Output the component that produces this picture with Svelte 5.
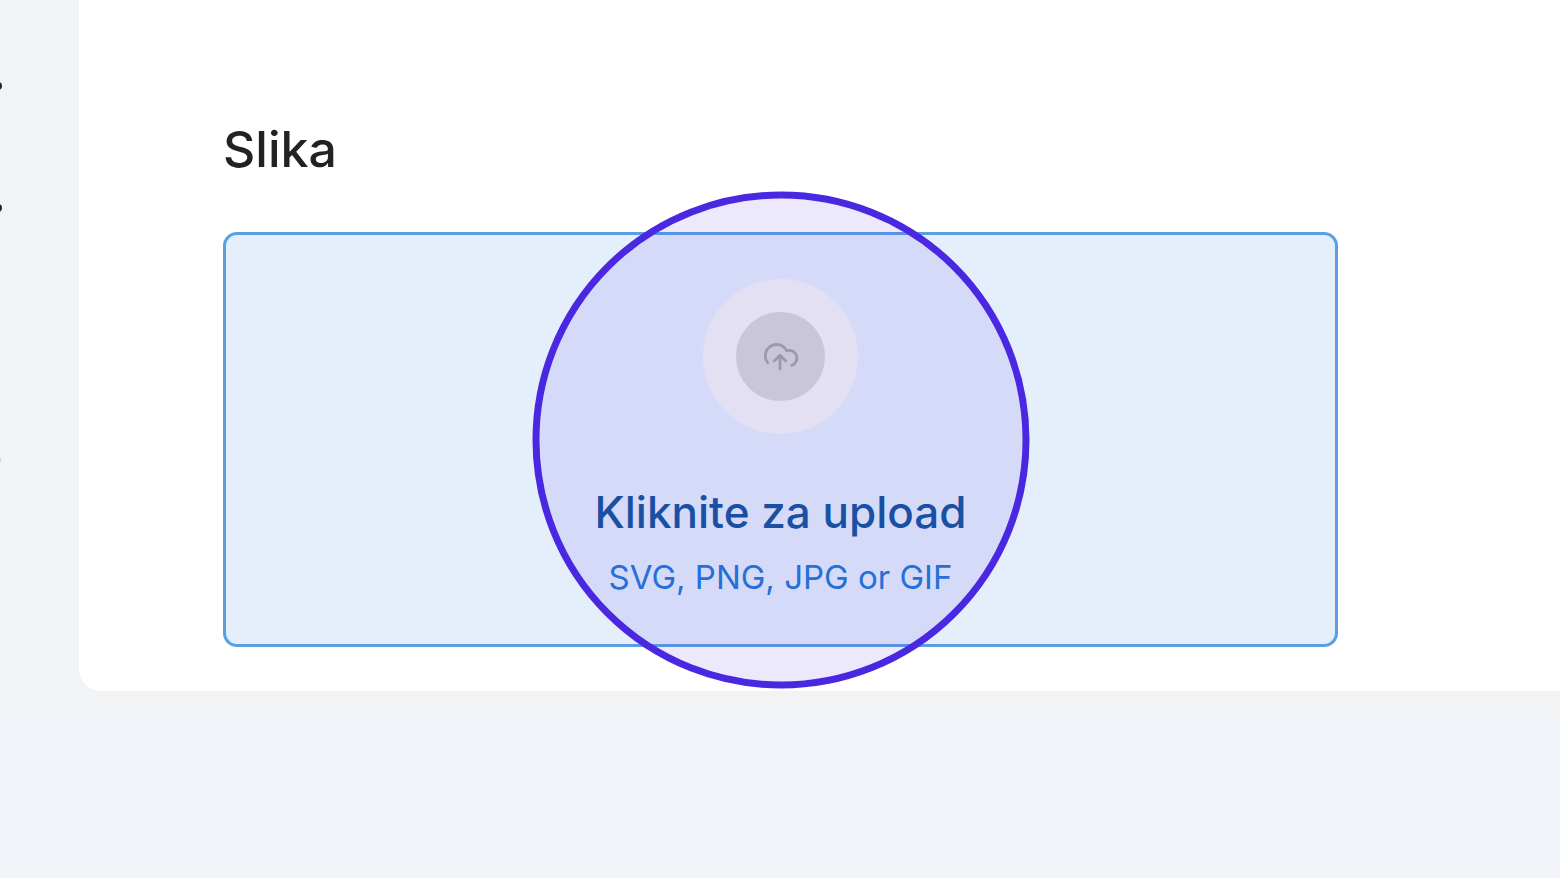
<script lang="ts">
  let files = $state<FileList | null>(null);
  let picker: HTMLInputElement;

  const formats = 'SVG, PNG, JPG or GIF';
  const label = $derived(files && files.length > 0 ? files[0].name : 'Kliknite za upload');
</script>

<div class="page">
  <div class="shell">
    <aside class="rail" aria-hidden="true">
      <span class="dot"></span>
      <span class="dot"></span>
      <span class="dot faint"></span>
    </aside>

    <main class="card">
      <h2>Slika</h2>
      <div class="field">
        <button type="button" class="dropzone" onclick={() => picker.click()}>
          <span class="badge">
            <svg viewBox="0 0 48 40" width="48" height="40" aria-hidden="true">
              <path d="M10.7 25.6A11.2 11.2 0 1 1 29.6 13.8a7.7 7.7 0 0 1 5.2 14.6" />
              <path d="M23 32V18.5M17.2 24l5.8-5.8 5.8 5.8" />
            </svg>
          </span>
          <span class="label">{label}</span>
          <span class="hint">{formats}</span>
        </button>
        <input type="file" accept=".svg,.png,.jpg,.gif" aria-label="Slika" hidden bind:this={picker} bind:files />
        <span class="ring"></span>
      </div>
    </main>
  </div>
</div>

<style>
  :global(body) {
    margin: 0;
    background: #f0f3f8;
    font-family: Inter, 'Liberation Sans', sans-serif;
  }
  .page {
    overflow: hidden;
  }
  .shell {
    display: flex;
    padding-bottom: 23px;
    background: #f2f3f5;
  }
  .rail {
    flex: 0 0 79px;
    display: flex;
    flex-direction: column;
    gap: 114px;
    padding-top: 82px;
    box-sizing: border-box;
  }
  .dot {
    width: 8px;
    height: 8px;
    margin-left: -6px;
    border-radius: 50%;
    background: #222;
  }
  .faint {
    margin-top: 130px;
    margin-left: -7px;
    background: #d0d2d6;
  }
  .card {
    flex: 1;
    padding: 119px 222px 44px 144px;
    border-bottom-left-radius: 22px;
    background: #fff;
  }
  h2 {
    margin: 0 0 53px;
    font-size: 50px;
    line-height: 60px;
    font-weight: 500;
    color: #222;
  }
  .field {
    position: relative;
  }
  .dropzone {
    display: flex;
    flex-direction: column;
    align-items: center;
    width: 100%;
    padding: 44px 24px;
    border: 3px solid #5a9fe2;
    border-radius: 14px;
    background: #e5effc;
    font-family: inherit;
    cursor: pointer;
  }
  .badge {
    display: flex;
    align-items: center;
    justify-content: center;
    width: 89px;
    height: 89px;
    margin-bottom: 50px;
    border: 33px solid #f5f5f5;
    border-radius: 50%;
    background: #d9d9d9;
  }
  svg {
    fill: none;
    stroke: #a5a6a8;
    stroke-width: 2.8;
    stroke-linecap: round;
    stroke-linejoin: round;
  }
  .label {
    margin-bottom: 15px;
    font-size: 44px;
    line-height: 56px;
    font-weight: 500;
    color: #14559c;
  }
  .hint {
    margin-bottom: 1px;
    font-size: 33px;
    line-height: 44px;
    color: #2078d8;
  }
  .ring {
    position: absolute;
    top: 50%;
    left: 50%;
    width: 497px;
    height: 497px;
    box-sizing: border-box;
    border: 7px solid #4a27e0;
    border-radius: 50%;
    background: rgba(74, 39, 224, 0.1);
    background-clip: padding-box;
    transform: translate(-50%, -50%);
    pointer-events: none;
  }
</style>
